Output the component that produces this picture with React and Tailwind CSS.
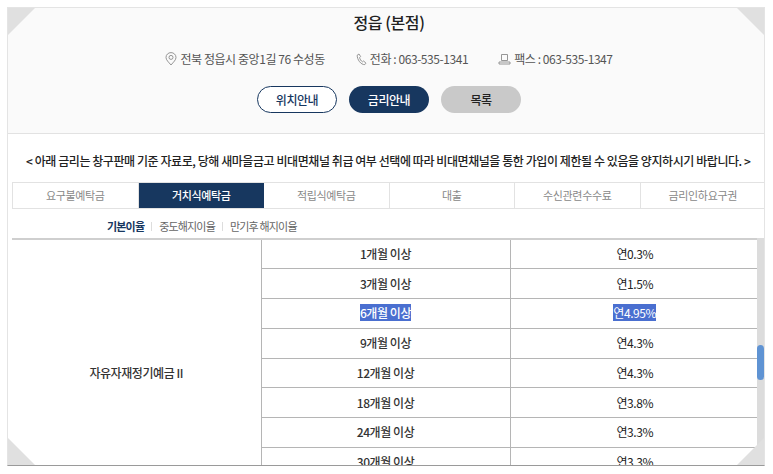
const tabs = ["요구불예탁금", "거치식예탁금", "적립식예탁금", "대출", "수신관련수수료", "금리인하요구권"];

// last row is past the fold, only there so the merged cell centres like the original
const rates = [
  ["1개월 이상", "연0.3%"],
  ["3개월 이상", "연1.5%"],
  ["6개월 이상", "연4.95%"],
  ["9개월 이상", "연4.3%"],
  ["12개월 이상", "연4.3%"],
  ["18개월 이상", "연3.8%"],
  ["24개월 이상", "연3.3%"],
  ["30개월 이상", "연3.3%"],
  ["", ""],
];

function Corner({ className, points }) {
  return (
    <svg className={"absolute w-[27px] h-[27px] " + className} viewBox="0 0 27 27">
      <polygon points={points} fill="#e0e0e0" />
    </svg>
  );
}

function PinIcon() {
  return (
    <svg width="12" height="14" viewBox="0 0 12 14" fill="none" stroke="#8a8a8a" strokeWidth="0.9">
      <path d="M6 13 C3.5 10 1 8 1 5.4 A5 4.8 0 0 1 11 5.4 C11 8 8.5 10 6 13Z" />
      <circle cx="6" cy="5.4" r="2" />
    </svg>
  );
}

function PhoneIcon() {
  return (
    <svg width="11" height="13" viewBox="0 0 11 13" fill="none" stroke="#8a8a8a" strokeWidth="0.9">
      <path d="M1.2 2.2 L3 1 L4.6 3.6 L3.6 4.6 C3.8 6 5 8 6.4 8.8 L7.6 8 L10 10.2 L8.8 11.6 C5 12 1 6.5 1.2 2.2Z" />
    </svg>
  );
}

function FaxIcon() {
  return (
    <svg width="13" height="12" viewBox="0 0 13 12" fill="none" stroke="#8a8a8a" strokeWidth="0.9">
      <path d="M3.5 1.5 H9.5 V7.5 H3.5Z" />
      <path d="M1 11 H12 V9 H1Z" />
    </svg>
  );
}

export default function App() {
  return (
    <div className="h-[474px] w-[773px] overflow-hidden bg-white pl-[7px] pt-[7px] font-['Noto_Sans_CJK_KR',sans-serif] tracking-[-0.027em]">
      <div className="relative flex h-[459px] w-[758px] flex-col overflow-hidden border-x border-t border-b border-x-[#e4e4e4] border-t-[#e4e4e4] border-b-[#9a9a9a]">
        <Corner className="left-0 top-0" points="0,0 27,0 0,27" />
        <Corner className="right-0 top-0" points="0,0 27,0 27,27" />
        <Corner className="left-0 bottom-0" points="0,0 27,27 0,27" />
        <Corner className="right-0 bottom-0" points="27,0 27,27 0,27" />

        <div className="h-[126px] shrink-0 border-b border-[#e2e2e2] bg-[#fafafa] pl-[6px]">
          <h1 className="pt-[1px] text-center text-[16px] leading-[26px] font-medium text-[#222]">정읍 (본점)</h1>
          <div className="mt-[14px] flex h-[20px] items-center justify-center text-[12px] text-[#555]">
            <span className="flex items-center gap-[3px]"><PinIcon />전북 정읍시 중앙1길 76 수성동</span>
            <span className="ml-[31px] flex items-center gap-[3px]"><PhoneIcon />전화 : 063-535-1341</span>
            <span className="ml-[30px] flex items-center gap-[3px]"><FaxIcon />팩스 : 063-535-1347</span>
          </div>
          <div className="mt-[17px] flex justify-center gap-[12px] text-[12px] font-medium">
            <button className="h-[27px] w-[80px] rounded-full border border-[#17375f] bg-white text-[#17375f]">위치안내</button>
            <button className="h-[27px] w-[80px] rounded-full bg-[#17375f] text-white">금리안내</button>
            <button className="h-[27px] w-[80px] rounded-full bg-[#c9c9c9] text-[#222]">목록</button>
          </div>
        </div>

        <p className="mt-[17px] pl-[18px] text-[12px] leading-[20px] font-medium whitespace-nowrap text-[#222]">
          &lt; 아래 금리는 창구판매 기준 자료로, 당해 새마을금고 비대면채널 취급 여부 선택에 따라 비대면채널을 통한 가입이 제한될 수 있음을 양지하시기 바랍니다. &gt;
        </p>

        <div className="mt-[11px] ml-[4px] grid h-[27px] w-[754px] shrink-0 grid-cols-6 border-y border-l border-[#e2e2e2] text-[11px] tracking-[-0.03em]">
          {tabs.map((t, i) => (
            <div
              key={t}
              className={
                i === 1
                  ? "flex items-center justify-center bg-[#17375f] font-medium text-white"
                  : "flex items-center justify-center border-r border-[#e2e2e2] text-[#888]"
              }
            >
              {t}
            </div>
          ))}
        </div>

        <div className="mt-[7px] flex h-[22px] shrink-0 items-center pb-[1px] pl-[99px] text-[11px] tracking-[-0.075em] text-[#666]">
          <span className="font-bold text-[#17375f]">기본이율</span>
          <span className="mx-[7px] h-[9px] w-px bg-[#ddd]" />
          <span>중도해지이율</span>
          <span className="mx-[7px] h-[9px] w-px bg-[#ddd]" />
          <span>만기후 해지이율</span>
        </div>

        <div className="ml-[4px] flex min-h-0 flex-1 overflow-hidden">
          <table className="h-fit w-[745px] shrink-0 table-fixed border-t-2 border-[#cfcfcf] text-[12px] text-[#222]">
            <tbody>
              {rates.map(([term, rate], i) => (
                <tr key={i} className="h-[29.75px]">
                  {i === 0 && (
                    <td rowSpan={rates.length} className="w-[249px] border-r border-[#b5b5b5] text-center font-medium text-[#333]">
                      자유자재정기예금 II
                    </td>
                  )}
                  <td className="w-[249px] border-r border-b border-[#b5b5b5] text-center font-medium text-[#333]">
                    <span className={i === 2 ? "bg-[#4a6fd0] text-white" : ""}>{term}</span>
                  </td>
                  <td className="border-b border-[#b5b5b5] pl-[2px] text-center">
                    <span className={i === 2 ? "bg-[#4a6fd0] text-white" : ""}>{rate}</span>
                  </td>
                </tr>
              ))}
            </tbody>
          </table>
          <div className="w-[7px] shrink-0 bg-[#dcdcdc] pt-[107px]">
            <div className="h-[35px] rounded-full bg-[#5f93d3]" />
          </div>
        </div>
      </div>
    </div>
  );
}
